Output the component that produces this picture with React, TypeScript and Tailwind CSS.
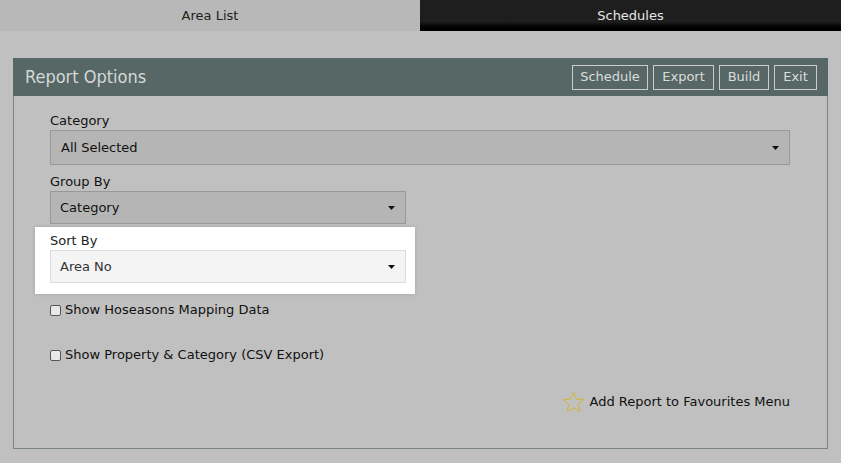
import { useState } from 'react';

const font = { fontFamily: '"DejaVu Sans", Verdana, sans-serif' };

const Caret = () => (
  <svg width="7" height="4" viewBox="0 0 7 4" className="shrink-0">
    <path d="M0 0h7L3.5 4z" fill="#111" />
  </svg>
);

const Select = ({ value, light = false, wide = false }: { value: string; light?: boolean; wide?: boolean }) => (
  <div
    className={`flex items-center justify-between pl-[9px] pr-[10px] text-[13px] leading-[16px] ${
      light ? 'border border-[#dcdcdc] bg-[#f4f4f4] text-[#333]' : 'border border-[#999] bg-[#b5b5b5] text-[#111]'
    } ${wide ? 'h-[35px] w-[740px] pl-[10px]' : 'h-[33px] w-[356px]'}`}
  >
    <span>{value}</span>
    <Caret />
  </div>
);

const Check = ({ label }: { label: string }) => {
  const [on, setOn] = useState(false);
  return (
    <label className="flex h-[16px] items-center gap-[4px] text-[13px] leading-[16px] text-[#111]">
      <input
        type="checkbox"
        checked={on}
        onChange={() => setOn(!on)}
        className="m-0 h-[11px] w-[11px] appearance-none rounded-[2px] border border-[#555] bg-[#e8e8e8]"
      />
      {label}
    </label>
  );
};

const buttons = [
  { label: 'Schedule', w: 'w-[76px]' },
  { label: 'Export', w: 'w-[61px]' },
  { label: 'Build', w: 'w-[50px]' },
  { label: 'Exit', w: 'w-[43px]' },
];

export default function App() {
  return (
    <div className="min-h-[463px] w-[841px] bg-[#c0c0c0]" style={font}>
      <div className="flex h-[31px] text-[13px]">
        <div className="flex w-[420px] items-center justify-center bg-[#b8b8b8] text-[#222]">Area List</div>
        <div className="flex flex-1 items-center justify-center bg-gradient-to-b from-[#1e1e1e] from-70% to-[#000] text-[#e6e6e6]">
          Schedules
        </div>
      </div>

      <div className="ml-[13px] mt-[27px] w-[815px] border border-[#7b8584]">
        <div className="-mx-px -mt-px flex h-[38px] items-center justify-between bg-[#566766] pl-[12px] pr-[11px]">
          <span
            className="text-[18px] leading-[22px] text-[#d4d8d8]"
            style={{ fontFamily: '"DejaVu Sans Condensed", "DejaVu Sans", sans-serif' }}
          >
            Report Options
          </span>
          <div className="flex gap-[5px]">
            {buttons.map((b) => (
              <button
                key={b.label}
                className={`flex h-[25px] items-center justify-center border border-[#c8cccc] text-[13px] text-[#dcdcdc] ${b.w}`}
              >
                {b.label}
              </button>
            ))}
          </div>
        </div>

        <div className="px-[36px] pb-[34px] pt-[17px]">
          <div className="text-[13px] leading-[16px] text-[#111]">Category</div>
          <div className="mt-[1px]">
            <Select value="All Selected" wide />
          </div>

          <div className="mt-[9px] text-[13px] leading-[16px] text-[#111]">Group By</div>
          <div className="mt-[1px]">
            <Select value="Category" />
          </div>

          <div className="-ml-[15px] mt-[3px] w-[380px] bg-white px-[15px] pb-[11px] pt-[6px] shadow-[0_0_4px_rgba(0,0,0,0.15)]">
            <div className="text-[13px] leading-[16px] text-[#222]">Sort By</div>
            <div className="mt-[1px]">
              <Select value="Area No" light />
            </div>
          </div>

          <div className="mt-[8px] flex flex-col gap-[29px]">
            <Check label="Show Hoseasons Mapping Data" />
            <Check label="Show Property & Category (CSV Export)" />
          </div>

          <div className="mt-[27px] flex justify-end pr-[1px]">
            <button className="flex h-[24px] items-center gap-[5px] text-[13px] leading-[16px] text-[#111]">
              <svg width="23" height="23" viewBox="0 0 24 24">
                <path
                  d="M12 1.5l3.1 7 7.4.6-5.6 4.9 1.7 7.3L12 17.4l-6.6 3.9 1.7-7.3-5.6-4.9 7.4-.6z"
                  fill="none"
                  stroke="#d4b42c"
                  strokeWidth="1"
                  strokeLinejoin="round"
                />
              </svg>
              Add Report to Favourites Menu
            </button>
          </div>
        </div>
      </div>
    </div>
  );
}
